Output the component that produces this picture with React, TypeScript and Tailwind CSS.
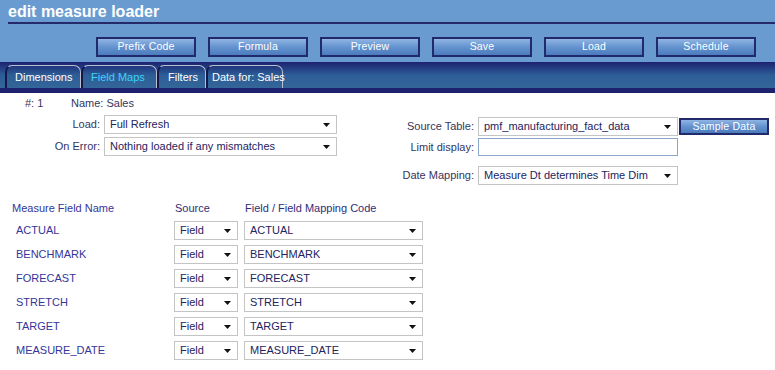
import React from "react";

const body = { fontFamily: '"Liberation Sans", Arial, sans-serif' };

const Arrow = () => (
  <svg width="7" height="4" viewBox="0 0 7 4" className="shrink-0">
    <path d="M0 0h7L3.5 4z" fill="#111" />
  </svg>
);

const Select = ({ value, w }: { value: string; w: string }) => (
  <div
    className={`${w} h-[19px] flex items-center justify-between bg-white border border-[#c4c4c4] pl-[5px] pr-[6px] text-[11px] text-[#23235e] shrink-0`}
  >
    <span className="truncate whitespace-nowrap">{value}</span>
    <Arrow />
  </div>
);

const NavButton = ({ label }: { label: string }) => (
  <div className="w-[100px] h-[20px] flex items-center justify-center border-2 border-[#222a6c] bg-gradient-to-b from-[#8fb5e3] via-[#6593cf] to-[#4b7bbd] text-white text-[10.5px] tracking-[0.2px] shrink-0">
    {label}
  </div>
);

const rows = ["ACTUAL", "BENCHMARK", "FORECAST", "STRETCH", "TARGET", "MEASURE_DATE"];

const tabs = [
  { label: "Dimensions", w: "w-[76px]", pl: "pl-[8px]", active: false },
  { label: "Field Maps", w: "w-[76px]", pl: "pl-[8px]", active: true },
  { label: "Filters", w: "w-[49px]", pl: "pl-[9px]", active: false },
  { label: "Data for: Sales", w: "w-[77px]", pl: "pl-[4px]", active: false },
];

export default function App() {
  return (
    <div className="w-[775px] h-[370px] bg-white overflow-hidden" style={body}>
      {/* header */}
      <div className="h-[62px] bg-[#6a9bd0] pt-[2px]">
        <div className="ml-[8px] h-[22px] border-b-2 border-[#252a6a] text-white font-bold text-[16px] leading-[20px]">
          edit measure loader
        </div>
        <div className="flex gap-[12px] pl-[96px] mt-[13px]">
          <NavButton label="Prefix Code" />
          <NavButton label="Formula" />
          <NavButton label="Preview" />
          <NavButton label="Save" />
          <NavButton label="Load" />
          <NavButton label="Schedule" />
        </div>
      </div>

      {/* tabs */}
      <div className="h-[31px] bg-gradient-to-b from-[#1d2170] via-[#2d5d96] to-[#336699] border-b-[5px] border-[#1d226f] flex items-end pl-[5px]">
        {tabs.map((t) => (
          <div
            key={t.label}
            className={`${t.w} ${t.pl} h-[23px] rounded-t-[7px] border-t border-r border-[#b8bfd0] border-l-2 border-l-[#141848] flex items-center text-[11px] whitespace-nowrap ${
              t.active ? "text-[#3fd0ff]" : "text-white"
            }`}
          >
            {t.label}
          </div>
        ))}
      </div>

      {/* top form */}
      <div className="flex text-[11px] text-[#35355f]">
        <div className="w-[396px] shrink-0">
          <div className="flex h-[19px] items-center mt-[1px]">
            <span className="ml-[25px] w-[46px]">#: 1</span>
            <span>Name: Sales</span>
          </div>
          <div className="grid grid-cols-[100px_233px] gap-x-[4px] gap-y-[3px] mt-[2px]">
            <span className="text-right leading-[19px]">Load:</span>
            <Select value="Full Refresh" w="w-[233px]" />
            <span className="text-right leading-[19px]">On Error:</span>
            <Select value="Nothing loaded if any mismatches" w="w-[233px]" />
          </div>
        </div>
        <div className="pt-[24px]">
          <div className="grid grid-cols-[78px_200px_auto] gap-x-[4px] items-center">
            <span className="text-right whitespace-nowrap">Source Table:</span>
            <Select value="pmf_manufacturing_fact_data" w="w-[200px]" />
            <div className="-ml-[3px] w-[90px] h-[17px] flex items-center justify-center border-2 border-[#222a6c] bg-gradient-to-b from-[#8fb5e3] via-[#6593cf] to-[#4b7bbd] text-white text-[10.5px] tracking-[0.2px]">
              Sample Data
            </div>
            <span className="text-right whitespace-nowrap mt-[2px]">Limit display:</span>
            <div className="w-[200px] h-[18px] mt-[2px] border border-[#8aa6c8] bg-white" />
            <span />
            <span className="text-right whitespace-nowrap mt-[10px]">Date Mapping:</span>
            <div className="mt-[10px]">
              <Select value="Measure Dt determines Time Dim" w="w-[200px]" />
            </div>
            <span />
          </div>
        </div>
      </div>

      {/* field map table */}
      <div className="mt-[16px] text-[11px] text-[#35359a]">
        <div className="flex h-[14px] items-center">
          <span className="ml-[12px] w-[163px]">Measure Field Name</span>
          <span className="w-[70px] text-[#2e2e7a]">Source</span>
          <span className="text-[#2e2e7a]">Field / Field Mapping Code</span>
        </div>
        <div className="flex flex-col gap-[5px] mt-[6px]">
          {rows.map((r) => (
            <div key={r} className="flex items-center">
              <span className="ml-[16px] w-[158px] -mt-[1px]">{r}</span>
              <Select value="Field" w="w-[64px]" />
              <div className="ml-[6px]">
                <Select value={r} w="w-[179px]" />
              </div>
            </div>
          ))}
        </div>
      </div>
    </div>
  );
}
